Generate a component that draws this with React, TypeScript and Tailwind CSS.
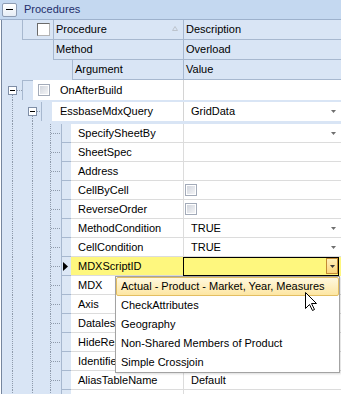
import React from "react";

const DOT = "#8e9aab";

function MinusBox({ x, y }: { x: number; y: number }) {
  return (
    <g>
      <rect x={x + 0.5} y={y + 0.5} width={8} height={8} fill="#ffffff" stroke="#7f8ea6" />
      <line x1={x + 2} x2={x + 7} y1={y + 4.5} y2={y + 4.5} stroke="#000000" />
    </g>
  );
}

function VDot({ x, y1, y2 }: { x: number; y1: number; y2: number }) {
  return <line x1={x + 0.5} x2={x + 0.5} y1={y1} y2={y2} stroke={DOT} strokeDasharray="1 1" />;
}

function HDot({ y, x1, x2 }: { y: number; x1: number; x2: number }) {
  return <line x1={x1} x2={x2} y1={y + 0.5} y2={y + 0.5} stroke={DOT} strokeDasharray="1 1" />;
}

function DropArrow() {
  return (
    <svg width="5" height="3" viewBox="0 0 5 3" className="ml-auto mr-[5px] shrink-0">
      <path d="M0 0H5L2.5 3Z" fill="#6f6f6f" />
    </svg>
  );
}

function GrayCheck({ className = "" }: { className?: string }) {
  return (
    <div className={`h-[12px] w-[12px] shrink-0 border border-[#a3abb9] bg-white p-[1px] ${className}`}>
      <div className="h-full w-full bg-gradient-to-br from-[#d2d6de] to-[#f3f4f6]" />
    </div>
  );
}

type RowDef = {
  name: string;
  value?: string;
  dd?: boolean;
  check?: boolean;
  focused?: boolean;
  clip?: boolean;
};

const rows: RowDef[] = [
  { name: "SpecifySheetBy", value: "", dd: true },
  { name: "SheetSpec" },
  { name: "Address" },
  { name: "CellByCell", check: true },
  { name: "ReverseOrder", check: true },
  { name: "MethodCondition", value: "TRUE", dd: true },
  { name: "CellCondition", value: "TRUE", dd: true },
  { name: "MDXScriptID", focused: true },
  { name: "MDX" },
  { name: "Axis" },
  { name: "DatalessMarker", clip: true },
  { name: "HideRestrictedData", clip: true },
  { name: "IdentifierType", clip: true },
  { name: "AliasTableName", value: "Default" },
  { name: "" },
];

const items = [
  "Actual - Product - Market, Year, Measures",
  "CheckAttributes",
  "Geography",
  "Non-Shared Members of Product",
  "Simple Crossjoin",
];

export default function App() {
  return (
    <div className="relative h-[394px] w-[341px] overflow-hidden bg-white font-['Liberation_Sans',Arial,sans-serif] text-[11px] leading-none text-black">
      {/* Title bar */}
      <div className="flex h-[20px] items-center border-b border-[#9db1cc] bg-[#c4d8f0]">
        <div className="ml-[2px] flex h-[14px] w-[15px] items-center justify-center rounded-[2px] border border-[#8d9cb3] bg-gradient-to-b from-white to-[#e6edf6]">
          <div className="h-[1px] w-[7px] bg-black" />
        </div>
        <span className="ml-[7px] text-[#1f2e6b]">Procedures</span>
      </div>

      {/* Grid */}
      <div className="ml-[1px] h-[374px] border-l border-[#76869e] bg-[#d9e5f5]">
        {/* Header row 1 */}
        <div className="flex h-[20px]">
          <div className="w-[20px] shrink-0" />
          <div className="w-[11px] shrink-0 border-b border-l border-[#a7b8cf]" />
          <div className="flex w-[20px] shrink-0 items-center border-b border-[#a7b8cf]">
            <div className="ml-[4px] h-[13px] w-[13px] border border-[#6a6a6a] border-b-[#b5b5b5] border-r-[#b5b5b5] bg-white" />
          </div>
          <div className="flex w-[130px] shrink-0 items-center border-b border-l border-[#a7b8cf] pl-[2px]">
            <span>Procedure</span>
            <svg width="6" height="5" viewBox="0 0 6 5" className="ml-auto mr-[5px] -mt-[2px]">
              <path d="M3 0.5L5.5 4.5H0.5Z" fill="none" stroke="#bcc3cc" />
            </svg>
          </div>
          <div className="flex flex-1 items-center border-b border-l border-[#a7b8cf] pl-[2px]">Description</div>
        </div>
        {/* Header row 2 */}
        <div className="flex h-[20px]">
          <div className="w-[51px] shrink-0" />
          <div className="flex w-[130px] shrink-0 items-center border-b border-l border-[#a7b8cf] pl-[2px]">Method</div>
          <div className="flex flex-1 items-center border-b border-l border-[#a7b8cf] pl-[2px]">Overload</div>
        </div>
        {/* Header row 3 */}
        <div className="flex h-[20px]">
          <div className="w-[70px] shrink-0" />
          <div className="flex w-[111px] shrink-0 items-center border-b border-l border-[#a7b8cf] pl-[2px]">Argument</div>
          <div className="flex flex-1 items-center border-b border-l border-[#a7b8cf] pl-[2px]">Value</div>
        </div>

        {/* Level 0: OnAfterBuild */}
        <div className="flex h-[20px]">
          <svg width="20" height="20" className="shrink-0">
            <VDot x={10} y1={15} y2={20} />
            <HDot y={10} x1={15} x2={20} />
            <MinusBox x={6} y={6} />
          </svg>
          <div className="w-[11px] shrink-0 border-l border-t border-[#a7b8cf]" />
          <div className="flex w-[150px] shrink-0 items-center bg-white">
            <GrayCheck className="ml-[5px]" />
            <span className="ml-[10px]">OnAfterBuild</span>
          </div>
          <div className="flex-1 border-l border-[#d4d4d4] bg-white" />
        </div>
        <div className="flex h-[2px]">
          <svg width="20" height="2" className="shrink-0">
            <VDot x={10} y1={0} y2={2} />
          </svg>
        </div>

        {/* Level 1: EssbaseMdxQuery */}
        <div className="flex h-[19px]">
          <svg width="39" height="19" className="shrink-0">
            <VDot x={10} y1={0} y2={19} />
            <VDot x={30} y1={14} y2={19} />
            <HDot y={9} x1={35} x2={39} />
            <MinusBox x={26} y={5} />
          </svg>
          <div className="w-[11px] shrink-0 border-l border-[#a7b8cf]" />
          <div className="flex w-[131px] shrink-0 items-center bg-white pl-[8px]">EssbaseMdxQuery</div>
          <div className="flex flex-1 items-center border-l border-[#d4d4d4] bg-white pl-[7px]">
            <span>GridData</span>
            <DropArrow />
          </div>
        </div>
        <div className="flex h-[3px]">
          <svg width="39" height="3" className="shrink-0">
            <VDot x={10} y1={0} y2={3} />
            <VDot x={30} y1={0} y2={3} />
          </svg>
        </div>

        {/* Level 2 rows */}
        {rows.map((r, i) => (
          <div key={i} className="flex h-[19px]">
            <svg width="59" height="19" className="shrink-0">
              <VDot x={10} y1={0} y2={19} />
              <VDot x={30} y1={0} y2={19} />
              <VDot x={48} y1={0} y2={19} />
              <HDot y={9} x1={49} x2={59} />
            </svg>
            <div className="flex w-[10px] shrink-0 items-center border-b border-l border-[#a7b8cf] bg-[#dce7f5]">
              {r.focused && (
                <svg width="5" height="9" viewBox="0 0 5 9" className="ml-[1px]">
                  <path d="M0 0L5 4.5L0 9Z" fill="#000" />
                </svg>
              )}
            </div>
            <div
              className={`flex w-[112px] shrink-0 items-center border-b border-[#dcdcdc] pl-[7px] ${
                r.focused ? "bg-[#fef77e]" : "bg-white"
              }`}
            >
              {r.clip ? (
                <div className="w-[37px] overflow-hidden whitespace-nowrap">{r.name}</div>
              ) : (
                r.name
              )}
            </div>
            {r.focused ? (
              <div className="flex flex-1 bg-[#fef77e]">
                <div className="flex h-[19px] w-[156px] items-stretch border border-black">
                  <div className="ml-auto mb-[1px] flex w-[12px] items-center justify-center border border-[#c38a33] bg-gradient-to-b from-[#fff0b8] to-[#fbd77c]">
                    <svg width="5" height="3" viewBox="0 0 5 3">
                      <path d="M0 0H5L2.5 3Z" fill="#3a3a3a" />
                    </svg>
                  </div>
                </div>
              </div>
            ) : (
              <div className="flex flex-1 items-center border-b border-l border-[#dcdcdc] bg-white pl-[7px]">
                {r.check ? <GrayCheck className="-ml-[6px]" /> : <span>{r.value}</span>}
                {r.dd && <DropArrow />}
              </div>
            )}
          </div>
        ))}
      </div>

      {/* Dropdown popup */}
      <div className="absolute left-[115px] top-[276px] w-[225px] border border-[#a3a3a3] bg-white shadow-[1px_1px_2px_rgba(0,0,0,0.15)]">
        {items.map((t, i) =>
          i === 0 ? (
            <div
              key={t}
              className="flex h-[19px] items-center rounded-[2px] border border-[#e3be62] bg-gradient-to-b from-[#fff8de] to-[#fde6a2] pl-[4px]"
            >
              {t}
            </div>
          ) : (
            <div key={t} className="flex h-[19px] items-center pl-[5px]">
              {t}
            </div>
          )
        )}
      </div>

      {/* Mouse cursor */}
      <svg width="13" height="20" viewBox="0 0 13 20" className="absolute left-[305px] top-[292px]">
        <path
          d="M0.5 0.5L0.5 16.5L4.5 12.5L7.5 18.5L9.5 17.5L6.5 11.5L11.5 11.5Z"
          fill="#ffffff"
          stroke="#000000"
          strokeLinejoin="miter"
        />
      </svg>
    </div>
  );
}
